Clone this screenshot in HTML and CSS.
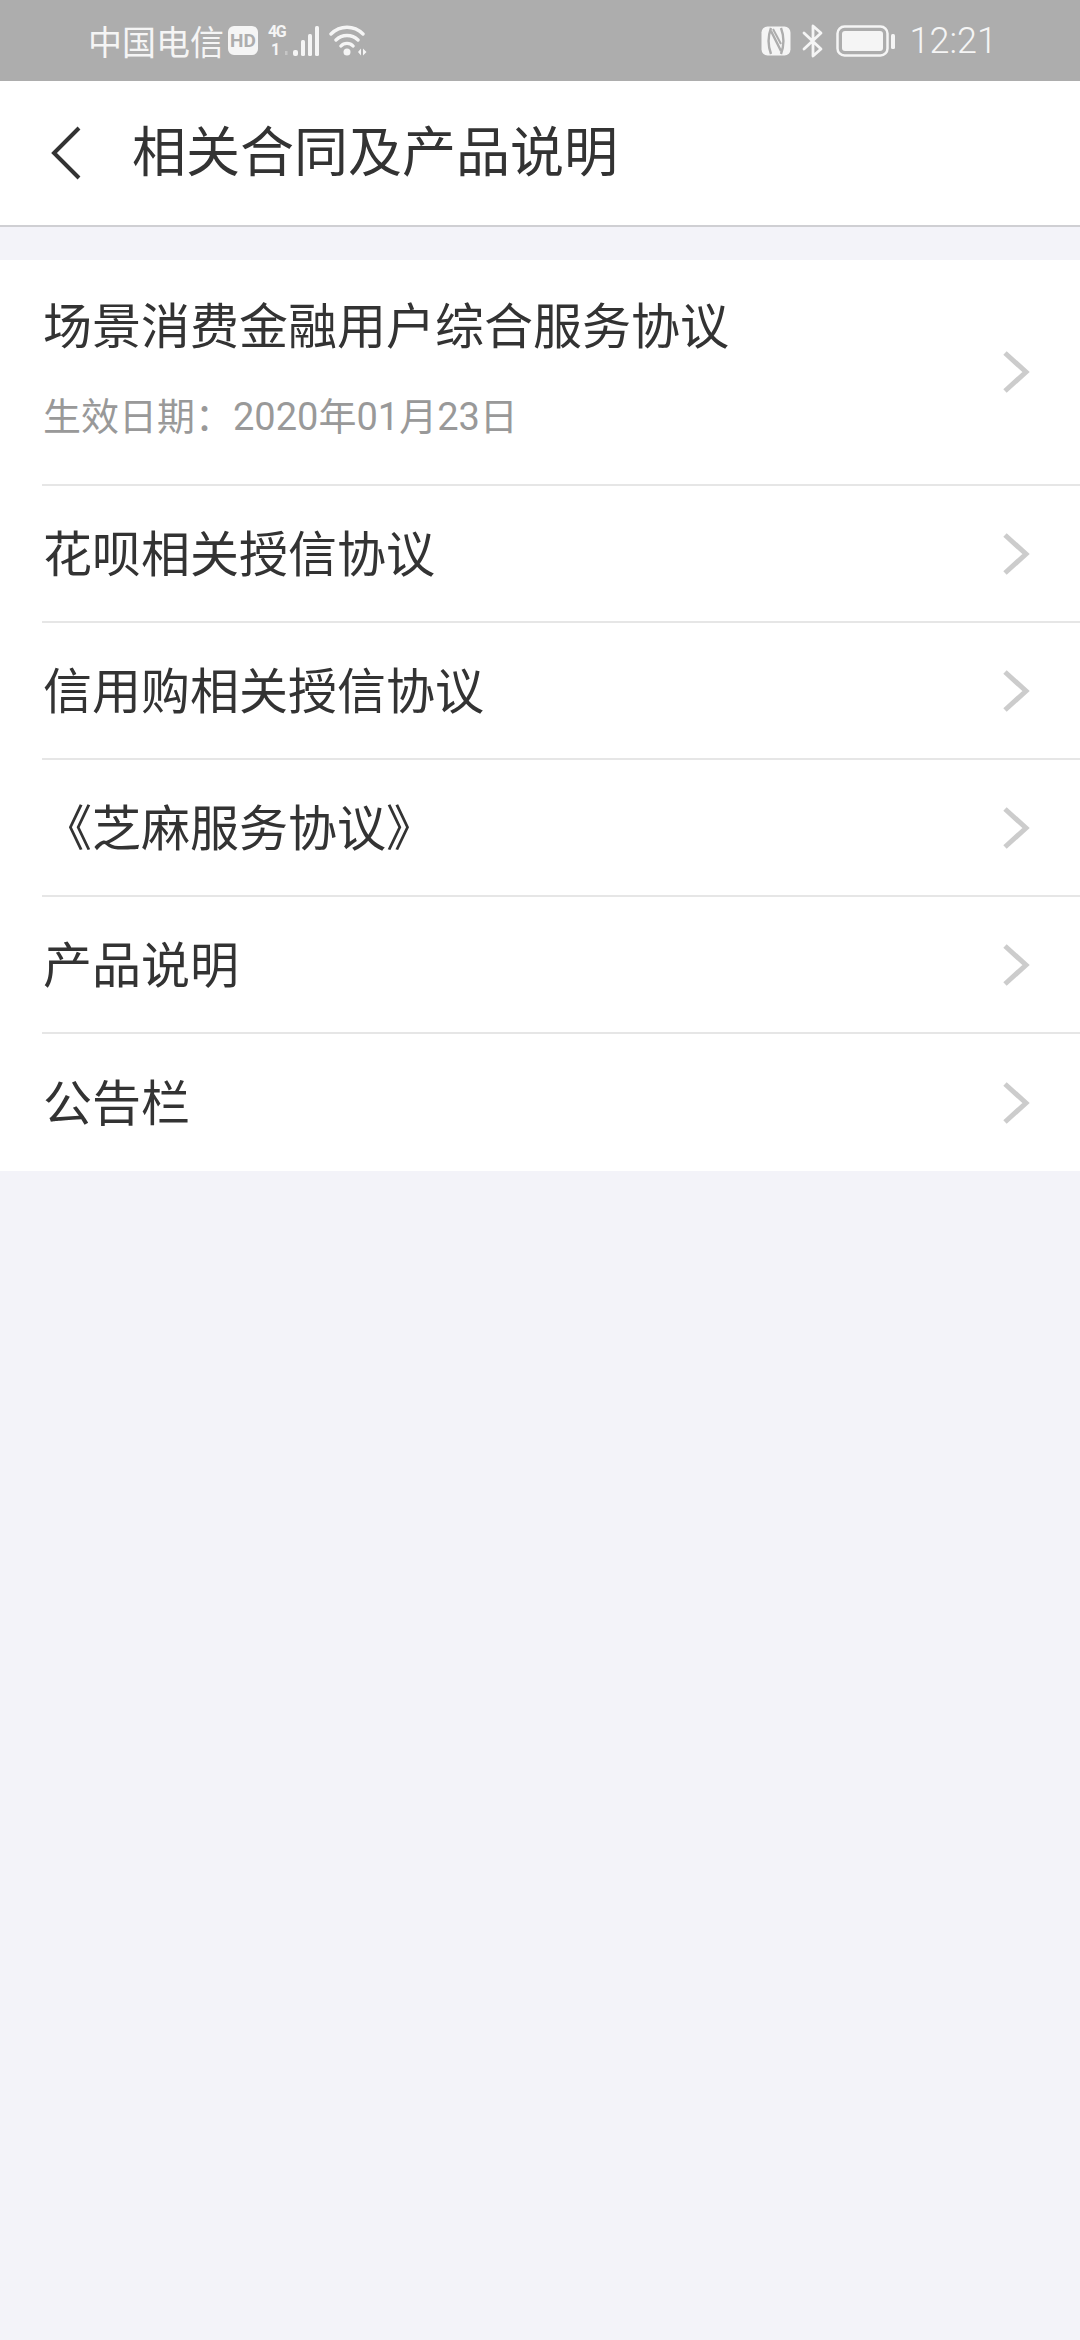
FILE: index.html
```html
<!DOCTYPE html>
<html lang="zh-CN">
<head>
<meta charset="utf-8">
<title>相关合同及产品说明</title>
<link rel="stylesheet" href="styles.css">
</head>
<body>
<div class="statusbar">
  <div class="status-left">
    <span class="carrier">中国电信</span>
    <span class="hd">HD</span>
    <div class="net">
      <span class="net-type">4G</span>
      <span class="net-sim">1</span>
    </div>
    <svg class="signal" width="34" height="32" viewBox="0 0 34 32">
      <path d="M1 30V26" stroke="#f5f5f5" stroke-opacity=".35" stroke-width="3"/>
      <rect x="8" y="25" width="5" height="6" rx="2" fill="#f5f5f5"/>
      <rect x="16" y="15" width="4" height="16" rx="1.5" fill="#f5f5f5"/>
      <rect x="23" y="9" width="4" height="22" rx="1.5" fill="#f5f5f5"/>
      <rect x="30" y="1" width="4" height="30" rx="1.5" fill="#f5f5f5"/>
    </svg>
    <svg class="wifi" width="38" height="32" viewBox="0 0 38 32">
      <path d="M2 9C11 0 25 0 34 9M7 15C13 9 23 9 29 15M12 21C15 17.500 21 17.500 24 21" fill="none" stroke="#f5f5f5" stroke-width="3.400" stroke-linecap="round"/>
      <circle cx="18" cy="27" r="3.500" fill="#f5f5f5"/>
      <path d="M29 27l3-3.500v7zM37.500 27l-3.500-3.500v7z" fill="#f5f5f5"/>
    </svg>
  </div>
  <div class="status-right">
    <svg class="nfc" width="30" height="30" viewBox="0 0 30 30">
      <rect x="0.500" y="0.500" width="29" height="29" rx="6" fill="#f5f5f5"/>
      <path d="M10 2C7 10 7 20 10 28M10 5l10 20M20 2C23 10 23 20 20 28" fill="none" stroke="#adadad" stroke-width="2.400"/>
      <path d="M12 3l8 15" fill="none" stroke="#adadad" stroke-width="2"/>
    </svg>
    <svg class="bt" width="22" height="34" viewBox="0 0 22 34">
      <path d="M2 9l17 16-8 7V2l8 7L2 25" fill="none" stroke="#f5f5f5" stroke-width="2.800" stroke-linejoin="round" stroke-linecap="round"/>
    </svg>
    <svg class="batt" width="60" height="32" viewBox="0 0 60 32">
      <rect x="1.500" y="1.500" width="50" height="29" rx="7" fill="none" stroke="#f5f5f5" stroke-width="2.500"/>
      <rect x="6" y="6" width="41" height="20" rx="3" fill="#f5f5f5"/>
      <rect x="55" y="9" width="4" height="15" rx="1.500" fill="#f5f5f5"/>
    </svg>
    <span class="time">12:21</span>
  </div>
</div>

<header class="navbar">
  <svg class="back" width="30" height="54" viewBox="0 0 30 54">
    <path d="M28 2L3 27l25 25" fill="none" stroke="#333" stroke-width="4"/>
  </svg>
  <h1 class="title">相关合同及产品说明</h1>
</header>

<ul class="list">
  <li class="row row-tall">
    <div class="row-text">
      <div class="row-title">场景消费金融用户综合服务协议</div>
      <div class="row-sub">生效日期：2020年01月23日</div>
    </div>
    <svg class="chev" width="28" height="44" viewBox="0 0 28 44"><path d="M3 3l21 19-21 19" fill="none" stroke="#ccc" stroke-width="5"/></svg>
  </li>
  <li class="row">
    <div class="row-title">花呗相关授信协议</div>
    <svg class="chev" width="28" height="44" viewBox="0 0 28 44"><path d="M3 3l21 19-21 19" fill="none" stroke="#ccc" stroke-width="5"/></svg>
  </li>
  <li class="row">
    <div class="row-title">信用购相关授信协议</div>
    <svg class="chev" width="28" height="44" viewBox="0 0 28 44"><path d="M3 3l21 19-21 19" fill="none" stroke="#ccc" stroke-width="5"/></svg>
  </li>
  <li class="row">
    <div class="row-title">《芝麻服务协议》</div>
    <svg class="chev" width="28" height="44" viewBox="0 0 28 44"><path d="M3 3l21 19-21 19" fill="none" stroke="#ccc" stroke-width="5"/></svg>
  </li>
  <li class="row">
    <div class="row-title">产品说明</div>
    <svg class="chev" width="28" height="44" viewBox="0 0 28 44"><path d="M3 3l21 19-21 19" fill="none" stroke="#ccc" stroke-width="5"/></svg>
  </li>
  <li class="row row-last">
    <div class="row-title">公告栏</div>
    <svg class="chev" width="28" height="44" viewBox="0 0 28 44"><path d="M3 3l21 19-21 19" fill="none" stroke="#ccc" stroke-width="5"/></svg>
  </li>
</ul>
</body>
</html>
```

FILE: styles.css
```css
* { box-sizing: border-box; }
html, body { margin: 0; padding: 0; }
body {
  width: 1080px;
  height: 2340px;
  background: #f3f3f9;
  font-family: "Noto Sans CJK SC", "Noto Sans", sans-serif;
  overflow: hidden;
}
.statusbar {
  height: 81px;
  background: #adadad;
  display: flex;
  align-items: center;
  justify-content: space-between;
  padding: 0 83px 0 88px;
  color: #f5f5f5;
}
.status-left, .status-right { display: flex; align-items: center; }
.carrier { font-size: 34px; line-height: 42px; width: 138px; white-space: nowrap; }
.hd {
  width: 30px;
  height: 29px;
  margin-left: 2px;
  border-radius: 6px;
  background: #f5f5f5;
  color: #adadad;
  font: bold 19px/29px "Roboto", sans-serif;
  text-align: center;
}
.net {
  width: 18px;
  height: 32px;
  margin-left: 10px;
  display: flex;
  flex-direction: column;
  justify-content: space-between;
  color: #f5f5f5;
  font: bold 16px/14px "Roboto", sans-serif;
  white-space: nowrap;
}
.net-type { letter-spacing: -1.5px; }
.net-sim { padding-left: 3px; }
.signal { margin-left: -1px; }
.wifi { margin-left: 10px; }
.status-right { gap: 12px; }
.bt { margin-left: -1px; }
.time {
  font: 300 36px/40px "Roboto", sans-serif;
  margin-left: 2px;
}
.navbar {
  height: 146px;
  background: #fff;
  border-bottom: 2px solid #cfcfd3;
  display: flex;
  align-items: center;
  padding-left: 51px;
}
.title {
  margin: -8px 0 0 51px;
  font-size: 54px;
  font-weight: 400;
  line-height: 64px;
  color: #333;
}
.list {
  list-style: none;
  margin: 33px 0 0;
  padding: 0 0 0 42px;
  background: #fff;
}
.row {
  height: 137px;
  display: flex;
  align-items: center;
  justify-content: space-between;
  padding-right: 50px;
  border-bottom: 2px solid #e6e6e6;
}
.row > .row-title { padding-bottom: 5px; }
.row-tall { height: 226px; }
.row-last { border-bottom: none; }
.row-title {
  font-size: 49px;
  line-height: 60px;
  color: #333;
  margin-left: 1px;
}
.row-text { margin-top: -12px; }
.row-sub {
  margin: 41px 0 0 1px;
  font-family: "Roboto", "Noto Sans CJK SC", sans-serif;
  font-size: 38px;
  line-height: 46px;
  color: #999;
}
.chev { flex: none; }
```
